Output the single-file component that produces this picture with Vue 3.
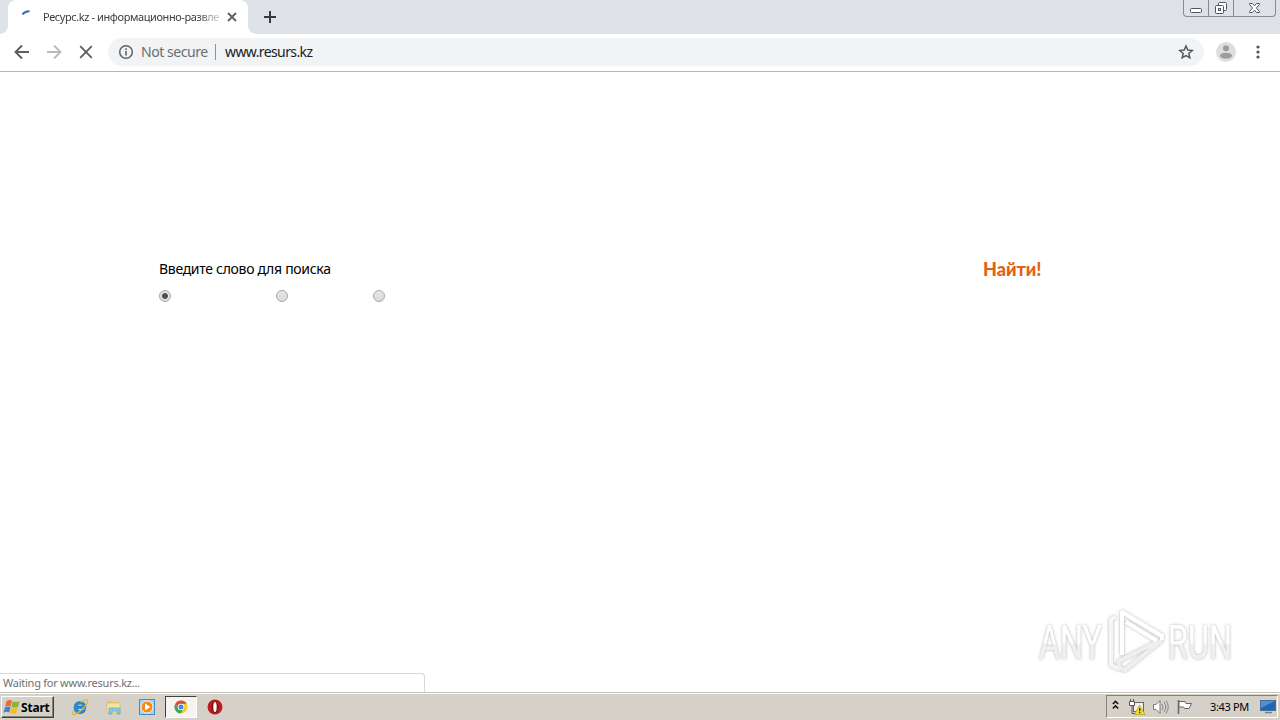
<template>
  <div class="screen">
    <header class="tab-strip">
      <div class="tab">
        <svg class="spinner" width="16" height="16" viewBox="0 0 16 16">
          <path d="M2.500 5.500Q5 2 9.500 2.200" fill="none" stroke="#3367c0" stroke-width="2" />
        </svg>
        <span class="tab-title">Ресурс.kz - информационно-развле</span>
        <svg class="tab-close" width="10" height="10" viewBox="0 0 10 10">
          <path d="M1 1l8 8M9 1l-8 8" stroke="#5b5e63" stroke-width="1.800" />
        </svg>
      </div>
      <svg class="new-tab" width="12" height="12" viewBox="0 0 12 12">
        <path d="M6 0v12M0 6h12" stroke="#36393f" stroke-width="2" />
      </svg>
      <div class="window-buttons">
        <span class="win-btn min">
          <svg width="14" height="7" viewBox="0 0 14 7">
            <rect x="1.500" y="1.500" width="11" height="4" rx="1" fill="#fff" stroke="#50545d" />
          </svg>
        </span>
        <span class="win-btn max">
          <svg width="14" height="14" viewBox="0 0 14 14">
            <g fill="#fff" stroke="#50545d">
              <rect x="4.500" y="1.500" width="8" height="8" rx="1" />
              <rect x="1.500" y="4.500" width="8" height="8" rx="1" />
              <rect x="4.500" y="7.500" width="2" height="2" />
            </g>
          </svg>
        </span>
        <span class="win-btn close">
          <svg width="13" height="12" viewBox="0 0 13 12">
            <path d="M1.500 1.500h3l2 2.300 2-2.300h3v1L8.400 6l3.100 3.500v1h-3l-2-2.300-2 2.300h-3v-1L4.600 6 1.500 2.500z" fill="#fff" stroke="#50545d" />
          </svg>
        </span>
      </div>
    </header>

    <nav class="toolbar">
      <svg class="nav-icon" width="16" height="16" viewBox="0 0 16 16">
        <path d="M15 8H2M8 1.500L1.500 8 8 14.500" fill="none" stroke="#5a5d61" stroke-width="1.900" />
      </svg>
      <svg class="nav-icon" width="16" height="16" viewBox="0 0 16 16">
        <path d="M1 8h13M8 1.500L14.500 8 8 14.500" fill="none" stroke="#b9babd" stroke-width="1.900" />
      </svg>
      <svg class="nav-icon" width="16" height="16" viewBox="0 0 16 16">
        <path d="M2.200 2.200l11.600 11.600M13.800 2.200L2.200 13.800" stroke="#5a5d61" stroke-width="1.800" />
      </svg>
      <div class="omnibox">
        <svg width="16" height="16" viewBox="0 0 16 16">
          <circle cx="8" cy="8" r="6.300" fill="none" stroke="#5f6368" stroke-width="1.500" />
          <path d="M8 7v4.500M8 4.300v1.600" stroke="#5f6368" stroke-width="1.600" />
        </svg>
        <span class="security">Not secure</span>
        <span class="divider"></span>
        <span class="url">www.resurs.kz</span>
        <svg class="star" width="16" height="16" viewBox="0 0 16 16">
          <path d="M8 2l1.750 4.100 4.450.400-3.370 2.930 1 4.370L8 11.500l-3.830 2.300 1-4.370L1.800 6.500l4.450-.400z" fill="none" stroke="#54585d" stroke-width="1.500" />
        </svg>
      </div>
      <svg class="avatar" width="20" height="20" viewBox="0 0 20 20">
        <circle cx="10" cy="10" r="10" fill="#dedede" />
        <circle cx="10" cy="6.200" r="3" fill="#9c9c9c" />
        <ellipse cx="10" cy="13.700" rx="6" ry="3" fill="#9c9c9c" />
      </svg>
      <svg class="menu" width="4" height="14" viewBox="0 0 4 14">
        <g fill="#505357">
          <circle cx="2" cy="2" r="1.600" />
          <circle cx="2" cy="7" r="1.600" />
          <circle cx="2" cy="12" r="1.600" />
        </g>
      </svg>
    </nav>

    <main class="page">
      <form class="search" @submit.prevent>
        <div class="search-row">
          <label class="prompt">Введите слово для поиска</label>
          <span class="find">Найти!</span>
        </div>
        <div class="options">
          <span
            v-for="(option, i) in options"
            :key="option"
            class="radio"
            :class="[option, { checked: selected === i }]"
            @click="selected = i"
          ></span>
        </div>
      </form>

      <svg class="watermark" width="210" height="72" viewBox="0 0 210 72">
        <defs>
          <linearGradient id="fade" x1="0" y1="0" x2="0" y2="1">
            <stop offset="0.500" stop-color="#fff" />
            <stop offset="0.540" stop-color="#f0f0f0" />
          </linearGradient>
          <filter id="glow" x="-10%" y="-20%" width="120%" height="140%">
            <feDropShadow dx="0" dy="0" stdDeviation="1.800" flood-color="#777" flood-opacity="0.600" />
          </filter>
        </defs>
        <g filter="url(#glow)" fill="url(#fade)">
          <text x="5" y="54" textLength="63" lengthAdjust="spacingAndGlyphs">ANY</text>
          <text x="134" y="54" textLength="64" lengthAdjust="spacingAndGlyphs">RUN</text>
          <g fill="none" stroke-linejoin="round" stroke-width="4">
            <path d="M82 12l-5 2v46l8 4" stroke="#f6f6f6" />
            <path d="M128 35L91 65l-6-2V56l38-19" stroke="#efefef" />
            <path d="M88 50V7l40 24v4M92 17l31 19" stroke="#fff" />
          </g>
        </g>
      </svg>

      <div class="status">Waiting for www.resurs.kz...</div>
    </main>

    <footer class="taskbar">
      <button class="start">
        <svg width="18" height="16" viewBox="0 0 18 16">
          <path d="M3.500 2.200Q6 .200 9 1.700L7.700 7.200Q5 6 2.200 7.500z" fill="#ed6a32" />
          <path d="M9.800 2.200q3 1.500 6.700 0L15 7.900q-3 1.300-6.500-.200z" fill="#84b735" />
          <path d="M2 8.300q2.800-1.500 5.500-.300L6.200 13.500Q3.500 12 .500 13.700z" fill="#3c83cf" />
          <path d="M8.300 8.500q3 1.400 6.500.200l-1.500 5.700q-3 1.400-6.400-.300z" fill="#f3bd2d" />
        </svg>
        <span>Start</span>
      </button>
      <div class="quick-launch">
        <span class="app">
          <svg width="18" height="18" viewBox="0 0 18 18">
            <path d="M15 10.500H6q.500 2.300 3.400 2.300 1.800 0 2.500-1h2.900Q13.500 15.700 9 15.700 3 15.500 3 9.500q.300-5.800 6-6 6 .200 6 7zM6 8h6Q11.700 6 9 6 6.500 6.100 6 8z" fill="#278bd5" stroke="#1764ab" stroke-width=".500" />
            <path d="M2.800 12.500Q0 17.500 3.500 16.400C8 15 18 6 16.500 2.500 15.500.500 11.500 3 9.500 4.200" fill="none" stroke="#e6b735" stroke-width="1.200" />
          </svg>
        </span>
        <span class="app">
          <svg width="18" height="18" viewBox="0 0 18 18">
            <path d="M2 3h5l1 1h6v3H2z" fill="#e7c65e" />
            <path d="M2 5h13v10H2z" fill="#f7e597" stroke="#d9b75a" stroke-width=".600" />
            <path d="M4 16v-5q0-1 1-1h9q1 0 1 1v5h-3v-3H7v3z" fill="#8bcbea" stroke="#4c9dc6" stroke-width=".600" />
          </svg>
        </span>
        <span class="app">
          <svg width="18" height="18" viewBox="0 0 18 18">
            <rect x="1.500" y="1.500" width="15" height="15" fill="#a5d2ef" stroke="#4a8bc4" />
            <circle cx="9" cy="9" r="6" fill="#f28c1d" stroke="#fff" stroke-width=".800" />
            <path d="M7 5.500L12.500 9 7 12.500z" fill="#fff" />
          </svg>
        </span>
        <span class="app active">
          <svg width="16" height="16" viewBox="0 0 16 16">
            <circle cx="8" cy="8" r="6.500" fill="#f7ca2e" />
            <path d="M2.370 4.750A6.500 6.500 0 0 1 13.630 4.750L8 5 5.200 9.600z" fill="#dd4b3e" />
            <path d="M2.370 4.750L5.200 9.600 8 11l2.500-1L7.500 14.500A6.500 6.500 0 0 1 2.370 4.750z" fill="#3da45a" />
            <circle cx="8" cy="8" r="3.300" fill="#fff" />
            <circle cx="8" cy="8" r="2.500" fill="#4485e8" />
          </svg>
        </span>
        <span class="app">
          <svg width="16" height="16" viewBox="0 0 16 16">
            <circle cx="8" cy="8" r="7.500" fill="#b81e20" />
            <ellipse cx="8" cy="8" rx="3.500" ry="6" fill="#821012" />
            <ellipse cx="8" cy="8" rx="1.700" ry="5" fill="#fff" />
          </svg>
        </span>
      </div>
      <div class="tray">
        <svg class="expand" width="7" height="10" viewBox="0 0 7 10">
          <path d="M.800 4l2.700-2.600L6.200 4M.800 8.500l2.700-2.600 2.700 2.600" fill="none" stroke="#111" stroke-width="1.500" />
        </svg>
        <svg class="network" width="18" height="16" viewBox="0 0 18 16">
          <rect x="5.500" y="3.500" width="10" height="9" fill="#efefeb" stroke="#666" />
          <path d="M7 14.500h5" stroke="#666" />
          <path d="M1.500 2.500h5v4h-5zM2.500 0v2M5.500 0v2" fill="#fff" stroke="#555" />
          <path d="M4 6.500v8h3" fill="none" stroke="#555" />
          <path d="M11.500 6l5.500 9.500H6.500z" fill="#f5db25" stroke="#ad971a" stroke-width=".600" />
          <path d="M11.700 9v3.200M11.700 13v1.300" stroke="#222" stroke-width="1.200" />
        </svg>
        <svg class="volume" width="17" height="16" viewBox="0 0 17 16">
          <path d="M1.500 5.500h2.500l4-4v13l-4-4H1.500z" fill="#fff" stroke="#777" />
          <path d="M10 5q2 3 0 6M12 3q3.500 5 0 10M14 1.500q4.500 6.500 0 13" fill="none" stroke="#888" />
        </svg>
        <svg class="flag" width="17" height="16" viewBox="0 0 17 16">
          <path d="M2.500 1v14" stroke="#666" stroke-width="1.500" />
          <path d="M3 2.500h6l1 2h5.500l-2.500 5H8.500l-1-1.500H3z" fill="#fff" stroke="#666" />
        </svg>
        <span class="clock">3:43 PM</span>
        <svg class="desktop" width="16" height="14" viewBox="0 0 16 14">
          <rect x=".500" y=".500" width="15" height="10" fill="#2365b4" stroke="#4d6e97" />
          <path d="M1 1h14L1 8z" fill="#4b91d8" />
          <path d="M5 12.500h7" stroke="#64849f" stroke-width="1.500" />
        </svg>
      </div>
    </footer>
  </div>
</template>

<script setup>
import { ref } from 'vue'

const options = ['first', 'second', 'third']
const selected = ref(0)
</script>

<style>
body {
  margin: 0;
  overflow: hidden;
}
</style>

<style scoped>
.screen {
  width: 1280px;
  height: 720px;
  display: flex;
  flex-direction: column;
  background: #fff;
  font-family: 'Noto Sans', sans-serif;
  white-space: nowrap;
}

svg {
  display: block;
  flex: none;
}

.tab-strip {
  height: 34px;
  display: flex;
  background: #dee1e8;
}

.tab {
  box-sizing: border-box;
  width: 240px;
  height: 34px;
  margin-left: 8px;
  padding: 0 11px 0 12px;
  display: flex;
  align-items: center;
  background: #fff;
  border-radius: 8px 8px 0 0;
  position: relative;
}

.tab::before,
.tab::after {
  content: '';
  position: absolute;
  bottom: 0;
  width: 8px;
  height: 8px;
}

.tab::before {
  left: -8px;
  background: radial-gradient(circle at 0 0, transparent 7.5px, #fff 8px);
}

.tab::after {
  right: -8px;
  background: radial-gradient(circle at 100% 0, transparent 7.5px, #fff 8px);
}

.tab-title {
  width: 178px;
  margin-left: 7px;
  font-size: 11px;
  line-height: 32px;
  color: #3c4043;
  letter-spacing: -0.41px;
  mask-image: linear-gradient(to right, #000 154px, transparent 182px);
}

.tab-close {
  margin-left: auto;
}

.new-tab {
  margin: 11px 0 0 16px;
}

.window-buttons {
  box-sizing: border-box;
  width: 93px;
  height: 17px;
  margin: 0 4px 0 auto;
  display: flex;
  border: 1px solid #868b96;
  border-top: 0;
  border-radius: 0 0 4px 4px;
}

.win-btn {
  box-sizing: border-box;
  display: flex;
  align-items: center;
  justify-content: center;
}

.min {
  width: 25px;
  padding-top: 4px;
  border-right: 1px solid #868b96;
}

.max {
  width: 25px;
  border-right: 1px solid #868b96;
}

.close {
  width: 41px;
}

.toolbar {
  box-sizing: border-box;
  height: 38px;
  padding: 0 20px 2px 14px;
  display: flex;
  align-items: center;
  border-bottom: 1px solid #b4b6b7;
}

.nav-icon {
  margin-right: 16px;
}

.omnibox {
  box-sizing: border-box;
  width: 1096px;
  height: 28px;
  margin-left: -2px;
  padding: 0 10px;
  display: flex;
  align-items: center;
  border-radius: 14px;
  background: #f1f3f5;
  font-size: 14px;
}

.security {
  width: 67px;
  margin-left: 7px;
  color: #6a6d72;
  letter-spacing: -0.45px;
}

.divider {
  width: 1px;
  height: 16px;
  margin: 0 9px 0 7px;
  background: #8e9195;
}

.url {
  color: #202124;
  letter-spacing: -0.6px;
}

.star {
  margin-left: auto;
}

.avatar {
  margin-left: 12px;
}

.menu {
  margin-left: auto;
}

.page {
  height: 620px;
  position: relative;
}

.search {
  padding: 187px 0 0 159px;
}

.search-row {
  height: 20px;
  display: flex;
  align-items: center;
}

.prompt {
  width: 824px;
  padding-bottom: 2px;
  font-size: 14px;
  color: #000;
  letter-spacing: -0.3px;
}

.find {
  font-family: Lato, sans-serif;
  font-size: 18px;
  font-weight: 900;
  color: #e16216;
}

.options {
  display: flex;
  margin-top: 11px;
}

.radio {
  box-sizing: border-box;
  width: 12px;
  height: 12px;
  border: 1px solid #a8a8a8;
  border-radius: 50%;
  background: linear-gradient(#e7e7e7, #dadada);
}

.second {
  margin-left: 105px;
}

.third {
  margin-left: 85px;
}

.checked {
  background: radial-gradient(circle, #505050 2.6px, #e0e0e0 3.2px);
}

.watermark {
  position: absolute;
  left: 1034px;
  top: 533px;
}

.watermark text {
  font-family: Roboto, sans-serif;
  font-size: 48px;
  font-weight: 400;
}

.status {
  box-sizing: border-box;
  position: absolute;
  left: -1px;
  bottom: 0;
  width: 426px;
  height: 19px;
  padding-left: 3px;
  border: 1px solid #d8d8d8;
  border-bottom: 0;
  border-radius: 0 4px 0 0;
  background: #fff;
  font-size: 11px;
  line-height: 18px;
  letter-spacing: -0.25px;
  color: #707070;
}

.taskbar {
  box-sizing: border-box;
  height: 28px;
  padding: 2px 2px 0 1px;
  display: flex;
  border-top: 1px solid #c5c2b9;
  background: #d5d1c8;
  box-shadow: inset 0 1px #fff;
}

.start {
  box-sizing: border-box;
  width: 53px;
  height: 22px;
  margin: 1px 0 0;
  padding: 0 0 0 1px;
  display: flex;
  align-items: center;
  border: 1px solid;
  border-color: #fff #404040 #404040 #fff;
  box-shadow: inset -1px -1px #85827b;
  background: #d5d1c8;
  font: bold 12px 'Noto Sans', sans-serif;
  letter-spacing: -0.2px;
  color: #000;
}

.quick-launch {
  display: flex;
  margin-left: 10px;
}

.app {
  box-sizing: border-box;
  width: 32px;
  height: 22px;
  margin: 1px 1.7px 0 0;
  display: flex;
  align-items: center;
  justify-content: center;
}

.active {
  border: 1px solid;
  border-color: #404040 #fff #fff #404040;
  background: #f5f4f0;
}

.tray {
  box-sizing: border-box;
  width: 172px;
  height: 23px;
  margin-left: auto;
  padding-left: 5px;
  display: flex;
  align-items: center;
  border: 1px solid;
  border-color: #85827b #fff #fff #85827b;
}

.expand {
  margin-bottom: 3px;
}

.network {
  margin-left: 9px;
}

.volume {
  margin-left: 6px;
}

.flag {
  margin-left: 7px;
}

.clock {
  width: 40px;
  margin-left: 17px;
  font-size: 11px;
  letter-spacing: -0.35px;
  color: #000;
}

.desktop {
  margin-left: auto;
  margin-right: 1px;
}
</style>
